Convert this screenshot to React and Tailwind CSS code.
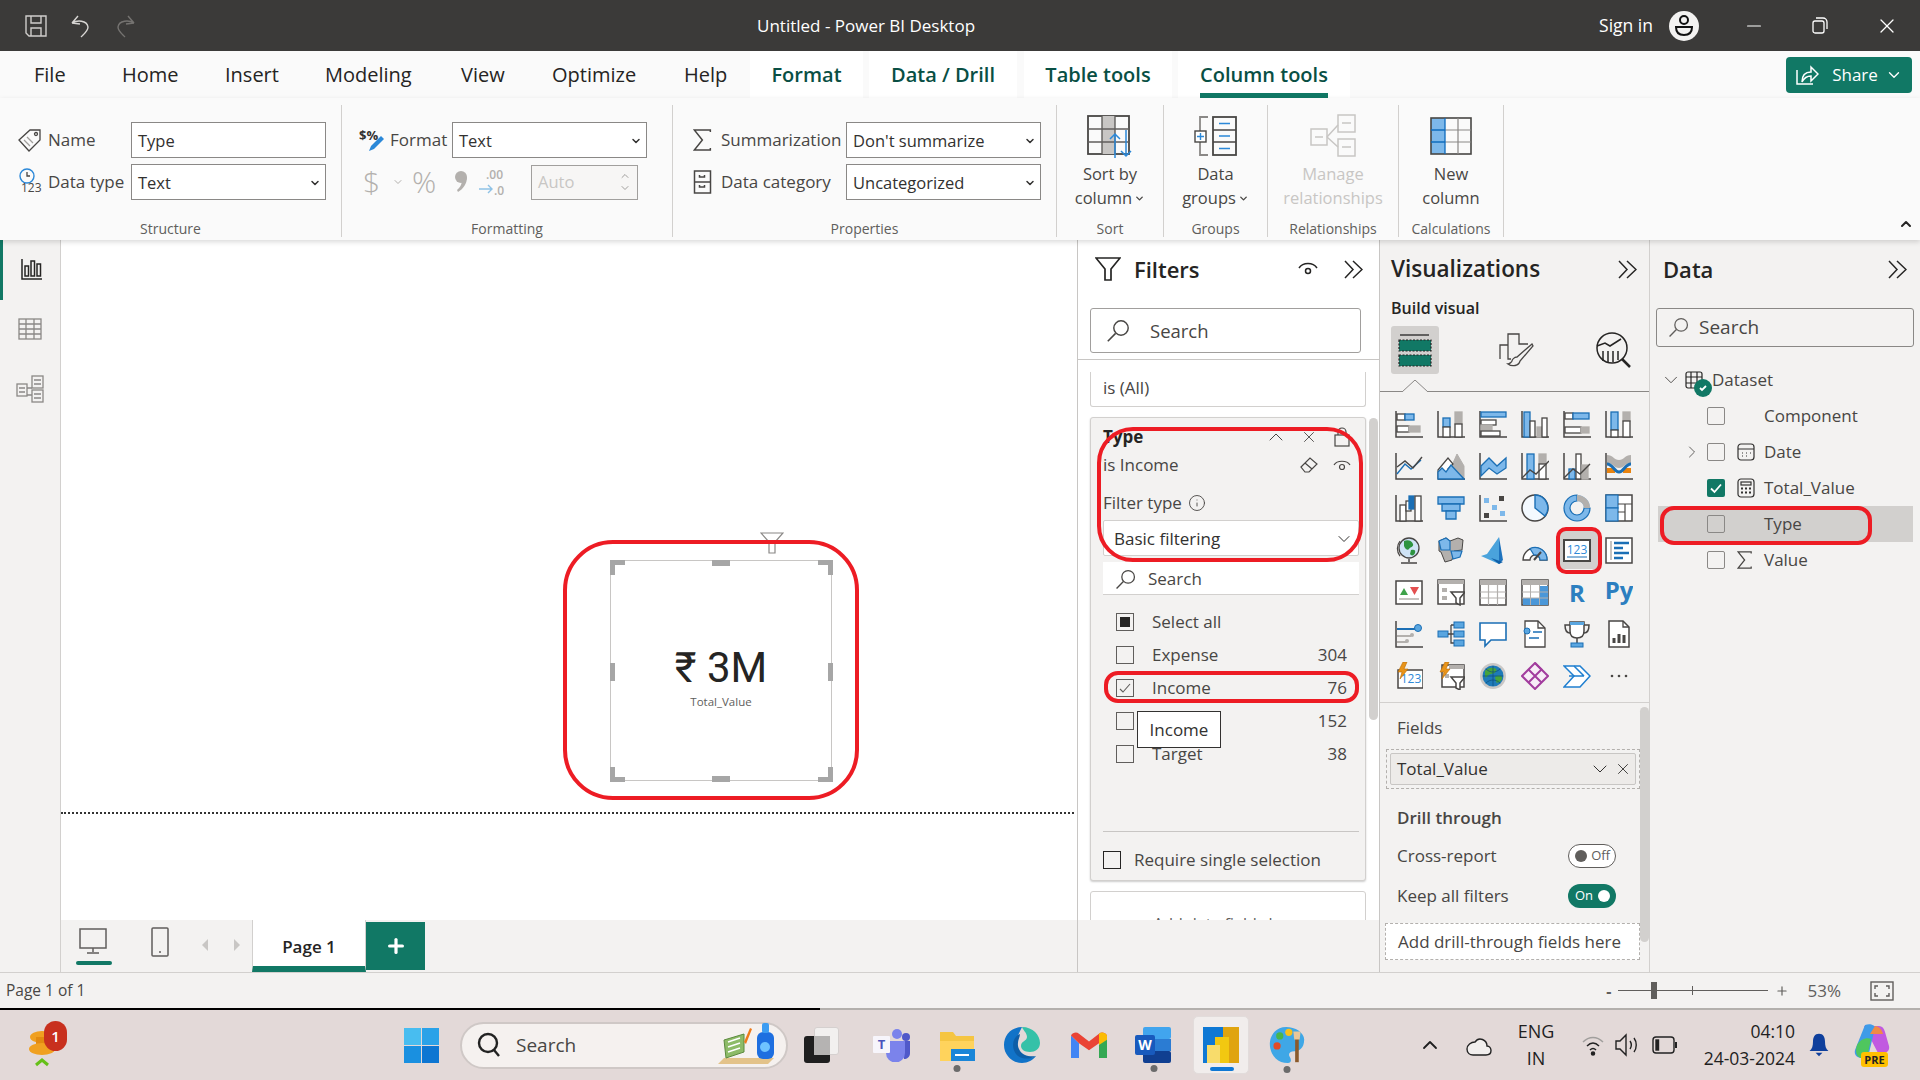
import React from "react";
import { X, Minus, ChevronDown, ChevronUp, ChevronRight, Plus, Info } from "lucide-react";

const D = "#484644";
const B = "#1b6fb5";
const L = "#7db8ea";
const G = "#b3b0ad";
const W = "#ffffff";

const Ico = ({ s = 28, box = 28, className = "", children }) => (
  <svg width={s} height={s} viewBox={`0 0 ${box} ${box}`} fill="none" className={className}>
    {children}
  </svg>
);

const Axis = () => <path d="M1 1v26h27" stroke={D} strokeWidth="1.5" />;
const R = ({ x, y, w, h, f = W, c = D }) => <rect x={x} y={y} width={w} height={h} fill={f} stroke={c} strokeWidth="1.3" />;

const vizIcons = [
  <><Axis /><R x="2" y="4" w="8" h="6" /><R x="10" y="4" w="9" h="6" f={L} c={B} /><R x="2" y="16" w="12" h="6" /><R x="14" y="16" w="11" h="6" f={G} c={G} /></>,
  <><Axis /><R x="6" y="8" w="7" h="9" f={L} c={B} /><R x="6" y="17" w="7" h="10" /><R x="18" y="2" w="7" h="12" f={G} c={G} /><R x="18" y="14" w="7" h="13" /></>,
  <><Axis /><R x="2" y="2" w="25" h="5" f={L} c={B} /><R x="2" y="10" w="15" h="5" /><R x="2" y="15" w="11" h="5" f={G} c={G} /><R x="2" y="21" w="19" h="5" /></>,
  <><Axis /><R x="3" y="2" w="6" h="25" f={L} c={B} /><R x="9" y="11" w="5" h="16" /><R x="16" y="17" w="5" h="10" f={G} c={G} /><R x="21" y="8" w="5" h="19" /></>,
  <><Axis /><R x="2" y="3" w="8" h="6" /><R x="10" y="3" w="16" h="6" f={L} c={B} /><R x="2" y="17" w="16" h="6" /><R x="18" y="17" w="8" h="6" f={G} c={G} /></>,
  <><Axis /><R x="6" y="2" w="7" h="18" f={L} c={B} /><R x="6" y="20" w="7" h="7" /><R x="18" y="2" w="7" h="9" f={G} c={G} /><R x="18" y="11" w="7" h="16" /></>,

  <><Axis /><path d="M2 22 10 12l6 5 10-9" stroke={B} strokeWidth="1.4" /><path d="M2 15l8-6 8 7 9-11" stroke={D} strokeWidth="1.4" /></>,
  <><path d="M1 27h27" stroke={D} strokeWidth="1.5" /><path d="M20 2l7 12v13H9z" fill={G} stroke={G} /><path d="M1 18 11 6l5 6-5 5 16 10H1z" fill={W} stroke={D} strokeWidth="1.2" /><path d="M1 27v-7l4-4 4 4 5-7 13 14z" fill={L} stroke={B} strokeWidth="1.3" /></>,
  <><Axis /><path d="M2 14l8-8 8 8 9-8v10l-9 6-8-6-8 8z" fill={L} stroke={B} strokeWidth="1.3" /></>,
  <><Axis /><R x="6" y="2" w="7" h="25" f={L} c={B} /><R x="18" y="2" w="7" h="10" f={G} c={G} /><R x="18" y="12" w="7" h="15" /><path d="M1 26l8-8 6 4 13-13" stroke={D} strokeWidth="1.4" /></>,
  <><Axis /><R x="6" y="17" w="6" h="10" f={L} c={B} /><R x="13" y="2" w="5" h="25" /><R x="19" y="13" w="6" h="14" f={G} c={G} /><path d="M1 26l9-9 7 5 10-10" stroke={D} strokeWidth="1.4" /></>,
  <><Axis /><path d="M2 3c6 0 7 5 12 5s6-5 12-5v8c-6 0-7 5-12 5S8 11 2 11z" fill={G} /><rect x="2" y="16" width="8" height="5" fill="#e8830f" /><rect x="18" y="16" width="8" height="5" fill="#e8830f" /><path d="M2 12c6 0 7 8 12 8s6-8 12-8" stroke={B} strokeWidth="3" /></>,

  <><Axis /><R x="5" y="11" w="6" h="16" /><R x="11" y="7" w="5" h="10" /><R x="14" y="2" w="5" h="13" f={B} c={B} /><R x="20" y="2" w="6" h="25" /></>,
  <><path d="M1 3h26v7H1z" fill={L} stroke={B} strokeWidth="1.3" /><path d="M5 10h18v7H5z" fill={L} stroke={B} strokeWidth="1.3" /><path d="M9 17h10v8H9z" fill={L} stroke={B} strokeWidth="1.3" /></>,
  <><Axis /><rect x="5" y="4" width="5" height="5" fill={L} /><rect x="20" y="2" width="5" height="5" fill={D} /><rect x="13" y="11" width="5" height="5" fill={L} /><rect x="21" y="17" width="5" height="5" fill={L} /><rect x="5" y="19" width="5" height="5" fill={D} /></>,
  <><circle cx="14" cy="14" r="13" fill="#f3f9fe" stroke={D} strokeWidth="1.5" /><path d="M14 14V1a13 13 0 0 1 10 21z" fill={L} stroke={B} strokeWidth="1.4" /></>,
  <><circle cx="14" cy="14" r="10" stroke={L} strokeWidth="6" /><path d="M14 1a13 13 0 1 0 13 13h-6a7 7 0 1 1-7-7z" fill={L} stroke={B} strokeWidth="1.2" /><path d="M14 1v6a7 7 0 0 1 7 7h6A13 13 0 0 0 14 1z" fill={G} /></>,
  <><rect x="1" y="1" width="26" height="26" fill={W} stroke={D} strokeWidth="1.5" /><rect x="1" y="1" width="12" height="13" fill={L} stroke={B} strokeWidth="1.2" /><rect x="1" y="14" width="12" height="13" fill={L} stroke={B} strokeWidth="1.2" /><path d="M13 10h14M20 10v17M13 18h7" stroke={D} strokeWidth="1.2" /></>,

  <><circle cx="14" cy="12" r="10" fill="#cfe3f5" stroke={D} strokeWidth="1.3" /><path d="M9 5c4-2 8 0 9 3s-3 3-4 5-4 0-5-3zM16 14c3-1 5 0 4 3s-4 3-5 1z" fill="#2d9440" /><path d="M14 23v3M6 27h16" stroke={D} strokeWidth="1.5" /><path d="M5 5a12 12 0 0 0 0 15" stroke={D} strokeWidth="1.2" /></>,
  <><path d="M2 5l7-3 4 3 8-3 5 2-1 10-8 1-2 9-7 2-4-10-2-1z" fill={G} stroke={D} strokeWidth="1" /><path d="M2 5l7-3 4 3v9H4zM14 15h11l-2 6-7 2z" fill={L} stroke={B} strokeWidth="1.2" /></>,
  <><path d="M20 1 8 18l-6 2 18 8z" fill="#4aa3dc" /><path d="M20 1v27l4-4z" fill="#1e73be" /><path d="M12 22l12 4-4 2z" fill="#0f5fa8" /></>,
  <><path d="M2 24a12 12 0 0 1 24 0h-7a5 5 0 0 0-10 0z" fill={W} stroke={D} strokeWidth="1.3" /><path d="M9 12.5A12 12 0 0 1 26 24h-7a5 5 0 0 0-6-5z" fill={L} stroke={B} strokeWidth="1.2" /><path d="M13 24l7-8" stroke={D} strokeWidth="2" /></>,
  <><rect x="1" y="4" width="26" height="21" fill={W} stroke={D} strokeWidth="2" /><text x="14" y="18" fontSize="12" textAnchor="middle" fill="#2f8ad8" fontFamily="Open Sans">123</text><path d="M4 21h20" stroke={B} strokeWidth="1" /></>,
  <><rect x="1" y="2" width="26" height="25" fill={W} stroke={D} strokeWidth="1.5" /><path d="M6 5v19" stroke={G} strokeWidth="1.5" /><path d="M9 7h15M9 12h9M9 17h15M9 22h9" stroke={B} strokeWidth="2.4" /></>,

  <><rect x="1" y="3" width="26" height="23" fill={W} stroke={D} strokeWidth="1.5" /><path d="M5 17l4-7 4 7z" fill="#3fa24a" /><path d="M15 9h9l-4.500 8z" fill="#e35050" /><path d="M4 21h20" stroke={G} strokeWidth="1.500" /></>,
  <><rect x="1" y="2" width="26" height="24" fill={W} stroke={D} strokeWidth="1.5" /><rect x="1" y="2" width="26" height="4" fill={G} /><rect x="5" y="10" width="5" height="4" fill={G} /><rect x="5" y="18" width="5" height="4" fill={G} /><path d="M14 14h14l-5 6v7l-4-2v-5z" fill={W} stroke={D} strokeWidth="1.5" /></>,
  <><rect x="1" y="2" width="26" height="25" fill={W} stroke={D} strokeWidth="1.5" /><rect x="1" y="2" width="26" height="5" fill={G} /><path d="M1 14h26M1 20h26M9.500 7v20M18.500 7v20" stroke={G} strokeWidth="1.200" /></>,
  <><rect x="1" y="2" width="26" height="25" fill={W} stroke={D} strokeWidth="1.5" /><rect x="1" y="2" width="26" height="5" fill={G} /><rect x="18" y="8" width="9" height="18" fill="#4a97d8" /><rect x="2" y="20" width="25" height="7" fill="#4a97d8" /><path d="M1 14h26M1 20h26M9.500 7v20M18.500 7v20" stroke={G} strokeWidth="1" /></>,
  <text x="14" y="24" fontSize="24" fontWeight="700" textAnchor="middle" fill="#2c7fc0" fontFamily="Open Sans">R</text>,
  <text x="14" y="21" fontSize="24" fontWeight="700" textAnchor="middle" fill="#2c7fc0" fontFamily="Open Sans">Py</text>,

  <><Axis /><path d="M2 9h22" stroke={B} strokeWidth="2" /><circle cx="23" cy="8" r="3.500" fill="#5aa6e0" stroke={B} /><path d="M2 16h14M2 22h10" stroke={G} strokeWidth="2" /><circle cx="17" cy="15" r="2" fill={G} /><circle cx="12" cy="21" r="2" fill={G} /></>,
  <><rect x="1" y="11" width="10" height="6" fill="#5aa6e0" stroke={B} /><path d="M11 14h6M14 5v18h3M14 5h3" stroke={D} strokeWidth="1.300" /><rect x="17" y="2" width="10" height="6" fill="#5aa6e0" stroke={B} /><rect x="17" y="11" width="10" height="6" fill="#5aa6e0" stroke={B} /><rect x="17" y="20" width="10" height="6" fill="#5aa6e0" stroke={B} /></>,
  <path d="M1 3h26v17H12l-6 6v-6H1z" fill={W} stroke={B} strokeWidth="1.600" />,
  <><path d="M4 1h13l7 7v19H4z" fill={W} stroke={D} strokeWidth="1.300" /><path d="M17 1v7h7" stroke={D} strokeWidth="1.300" /><circle cx="6" cy="11" r="3" fill="#5aa6e0" stroke={B} /><path d="M12 12h9M8 18h10" stroke={B} strokeWidth="1.300" /></>,
  <><path d="M7 2h14v9c0 5-3 7-7 7s-7-2-7-7z" fill={W} stroke={D} strokeWidth="1.500" /><rect x="7" y="2" width="14" height="3" fill="#5aa6e0" /><path d="M7 5H2c0 6 2 8 5 8M21 5h5c0 6-2 8-5 8M14 18v5" stroke={D} strokeWidth="1.500" /><rect x="8" y="23" width="12" height="4" fill="#5aa6e0" stroke={B} /></>,
  <><path d="M4 1h14l6 6v20H4z" fill={W} stroke={D} strokeWidth="1.500" /><path d="M18 1v6h6" stroke={D} strokeWidth="1.300" /><path d="M9 23v-5M14 23V14M19 23v-8" stroke={D} strokeWidth="3" /></>,

  <><rect x="3" y="8" width="25" height="18" fill={W} stroke={D} strokeWidth="1.500" /><text x="16" y="21" fontSize="12" textAnchor="middle" fill="#2f8ad8" fontFamily="Open Sans">123</text><path d="M8 0 3 10h4l-2 7 8-10H9l3-7z" fill="#e8941a" stroke="#b96a00" strokeWidth=".6" /></>,
  <><rect x="5" y="3" width="22" height="22" fill={W} stroke={D} strokeWidth="1.500" /><rect x="12" y="3" width="15" height="4" fill={G} /><path d="M14 15h14l-5 6v7l-4-2v-5z" fill={W} stroke={D} strokeWidth="1.500" /><rect x="8" y="12" width="4" height="4" fill={G} /><path d="M8 0 3 10h4l-2 7 8-10H9l3-7z" fill="#e8941a" stroke="#b96a00" strokeWidth=".6" /></>,
  <><circle cx="14" cy="14" r="13" fill="#c9c7c5" /><circle cx="14" cy="14" r="10.500" fill="#1e7ab8" /><path d="M6 9c3-4 9-4 11-2s-2 5-5 5-4 5-6 3zM16 15c3-2 7-2 7 1s-4 6-6 4z" fill="#46a33c" /><path d="M4 14h20M14 4v20M7 7c4 4 10 4 14 0M7 21c4-4 10-4 14 0" stroke="#0b4b78" strokeWidth=".7" /></>,
  <><path d="M14 1l13 13-13 13L1 14z" fill="#f7edf7" stroke="#a23d9e" strokeWidth="2" /><path d="M14 1l6.500 6.500L7.500 20.500M7.500 7.500l13 13" stroke="#a23d9e" strokeWidth="2" /></>,
  <><path d="M1 4h16l10 10-10 11H1l10-11z" fill={W} stroke="#1f7fd0" strokeWidth="1.500" /><path d="M6 14h15M11 4l10 10" stroke="#1f7fd0" strokeWidth="1.500" /></>,
  <><circle cx="7" cy="14" r="1.300" fill={D} /><circle cx="14" cy="14" r="1.300" fill={D} /><circle cx="21" cy="14" r="1.300" fill={D} /></>,
];

const SearchIcon = ({ s = 20, c = "#484644", className = "" }) => (
  <svg width={s} height={s} viewBox="0 0 20 20" fill="none" className={className}>
    <circle cx="12.500" cy="7.500" r="6" stroke={c} strokeWidth="1.200" />
    <path d="M8 12 1.500 18.500" stroke={c} strokeWidth="1.300" />
  </svg>
);

const Chevrons = () => (
  <svg width="19" height="19" viewBox="0 0 19 19" fill="none" stroke="#252423" strokeWidth="1.500">
    <path d="M1 1l8 8.500-8 8.500M9 1l9 8.500-9 8.500" />
  </svg>
);

const SelectBox = ({ label }) => (
  <div className="w-[195px] h-[36px] bg-white border border-[#8a8886] flex items-center justify-between pl-[6px] pr-[4px] pt-[2px] text-[16.500px] text-[#323130]">
    <span>{label}</span>
    <ChevronDown size={12} strokeWidth={3} className="text-[#323130]" />
  </div>
);

const TitleBar = () => (
  <div className="h-[51px] shrink-0 bg-[#3b3a39] flex items-center text-white">
    <div className="w-[145px] pl-[25px] flex items-center gap-[24px]">
      <svg width="22" height="24" viewBox="0 0 22 24" fill="none" stroke="#cfcdcb" strokeWidth="1.400">
        <path d="M1 2h20v20H4l-3-3z" />
        <path d="M6 2v7h10V2M6 22v-8h10v8" />
      </svg>
      <svg width="20" height="24" viewBox="0 0 20 24" fill="none" stroke="#d8d6d4" strokeWidth="1.400">
        <path d="M1 9l6-7M1 9l8 1M1 9c5-3 15-3 16 4 0 4-4 7-7 10" />
      </svg>
      <svg width="20" height="24" viewBox="0 0 20 24" fill="none" stroke="#757371" strokeWidth="1.400">
        <path d="M19 9l-6-7M19 9l-8 1M19 9C14 6 4 6 3 13c0 4 4 7 7 10" />
      </svg>
    </div>
    <div className="ml-[612px] w-[220px] text-[17px] whitespace-nowrap">Untitled - Power BI Desktop</div>
    <div className="ml-auto flex items-center">
      <span className="text-[17.500px]">Sign in</span>
      <div className="ml-[16px] w-[30px] h-[30px] rounded-full bg-[#f3f2f1] flex items-center justify-center">
        <svg width="22" height="24" viewBox="0 0 22 24" fill="none" stroke="#111" strokeWidth="2">
          <circle cx="11" cy="6" r="4" />
          <path d="M3 13h16c0 5-3 8-8 8s-8-3-8-8z" />
        </svg>
      </div>
      <Minus size={22} strokeWidth={1.300} className="ml-[44px]" />
      <svg width="16" height="17" viewBox="0 0 16 17" fill="none" stroke="white" strokeWidth="1.300" className="ml-[47px]">
        <rect x="1" y="4" width="11" height="12" rx="2" />
        <path d="M4 1h7a4 4 0 0 1 4 4v7" />
      </svg>
      <X size={24} strokeWidth={1.300} className="ml-[47px] mr-[21px]" />
    </div>
  </div>
);

const plainTabs = [
  ["File", "w-[84px]", "pl-[34px]"],
  ["Home", "w-[102px]", "pl-[38px]"],
  ["Insert", "w-[100px]", "pl-[39px]"],
  ["Modeling", "w-[136px]", "pl-[39px]"],
  ["View", "w-[91px]", "pl-[39px]"],
  ["Optimize", "w-[132px]", "pl-[39px]"],
  ["Help", "w-[105px]", "pl-[39px]"],
];

const TabBar = () => (
  <div className="h-[47px] shrink-0 bg-[#fafafa] flex items-start text-[20px] text-[#252423]">
    {plainTabs.map(([t, w, p]) => (
      <div key={t} className={`${w} ${p} h-[47px] flex items-center`}>{t}</div>
    ))}
    <div className="w-[113px] h-[47px] bg-white flex items-center justify-center font-semibold text-[#094f44]">Format</div>
    <div className="w-[148px] ml-[6px] h-[47px] bg-white flex items-center justify-center font-semibold text-[#094f44]">Data / Drill</div>
    <div className="w-[148px] ml-[7px] h-[47px] bg-white flex items-center justify-center font-semibold text-[#094f44]">Table tools</div>
    <div className="w-[172px] ml-[6px] h-[47px] bg-white relative flex items-center justify-center font-semibold text-[#094f44]">
      Column tools
      <div className="absolute left-[22px] bottom-0 w-[128px] h-[5px] bg-[#117865]" />
    </div>
    <div className="ml-auto mr-[8px] mt-[6px] w-[126px] h-[36px] rounded-[4px] bg-[#117865] text-white flex items-center justify-center gap-[13px] text-[17px]">
      <svg width="24" height="24" viewBox="0 0 24 24" fill="none" stroke="white" strokeWidth="1.500">
        <path d="M2 7v14h16" />
        <path d="M7 19c0-7 4-10 9-10V4l7 7-7 7v-5c-4 0-7 2-9 6z" />
      </svg>
      <span className="flex items-center gap-[7px]">Share<ChevronDown size={18} strokeWidth={1.800} /></span>
    </div>
  </div>
);

const RibbonGroup = ({ w, label, children }) => (
  <div className={`${w} h-[132px] shrink-0 border-r border-[#d2d0ce] flex flex-col`}>
    <div className="flex-1">{children}</div>
    <div className="h-[16px] text-center text-[14px] text-[#605e5c] leading-[16px] whitespace-nowrap">{label}</div>
  </div>
);

const LargeBtn = ({ top, bottom, disabled, children }) => (
  <div className={`flex flex-col items-center pt-[6px] text-[16.500px] leading-[24px] ${disabled ? "text-[#c8c6c4]" : "text-[#484644]"}`}>
    <div className="h-[50px] flex items-center">{children}</div>
    <div className="mt-[1px]">{top}</div>
    <div className="flex items-center gap-[2px] whitespace-nowrap">{bottom}</div>
  </div>
);

const Ribbon = () => (
  <div className="h-[142px] shrink-0 bg-[#fafafa] relative z-10 shadow-[0_2px_5px_rgba(0,0,0,0.15)] flex pt-[7px] text-[17px] text-[#484644]">
    <RibbonGroup w="w-[342px]" label="Structure">
      <div className="pt-[17px] pl-[18px] flex flex-col gap-[6px]">
        <div className="flex items-center">
          <svg width="24" height="24" viewBox="0 0 24 24" fill="none" stroke="#484644" strokeWidth="1.300" className="w-[24px]">
            <path d="M1 12 12 2h10v10L11 23z" />
            <circle cx="18" cy="6" r="1.500" />
            <path d="M6 12l6 6M9 9l6 6" stroke="#a19f9d" />
          </svg>
          <span className="w-[89px] pl-[6px]">Name</span>
          <div className="w-[195px] h-[36px] bg-white border border-[#8a8886] flex items-center pl-[6px] pt-[2px] text-[16.500px] text-[#323130]">Type</div>
        </div>
        <div className="flex items-center">
          <svg width="24" height="28" viewBox="0 0 24 28" fill="none" className="w-[24px]">
            <circle cx="9" cy="8" r="7" stroke="#2b88d8" strokeWidth="1.400" />
            <path d="M9 4v4h3" stroke="#484644" strokeWidth="1.300" />
            <text x="3" y="24" fontSize="12" fill="#484644" fontFamily="Open Sans">123</text>
          </svg>
          <span className="w-[89px] pl-[6px] whitespace-nowrap">Data type</span>
          <SelectBox label="Text" />
        </div>
      </div>
    </RibbonGroup>
    <RibbonGroup w="w-[331px]" label="Formatting">
      <div className="pt-[17px] pl-[17px] flex flex-col gap-[6px]">
        <div className="flex items-center">
          <svg width="26" height="28" viewBox="0 0 26 28" fill="none" className="w-[26px]">
            <text x="0" y="14" fontSize="13" fontWeight="700" fill="#323130" fontFamily="Open Sans">$%</text>
            <path d="M10 25l2-5 10-10 3 3-10 10z" fill="#2b88d8" />
          </svg>
          <span className="w-[67px] pl-[5px]">Format</span>
          <SelectBox label="Text" />
        </div>
        <div className="flex items-center h-[36px]">
          <span className="ml-[4px] w-[24px] text-[30px] leading-[36px] font-light text-[#b3b0ad]">$</span>
          <ChevronDown size={12} className="text-[#b3b0ad] w-[22px]" />
          <span className="w-[36px] ml-[3px] text-[30px] leading-[36px] font-light text-[#b3b0ad]">%</span>
          <svg width="14" height="26" viewBox="0 0 14 26" fill="#b3b0ad" className="ml-[6px]">
            <circle cx="7" cy="8" r="6" />
            <path d="M13 8c0 7-4 12-9 15l-1-2c4-3 5-7 5-11z" />
          </svg>
          <svg width="28" height="34" viewBox="0 0 28 34" fill="none" className="ml-[10px]">
            <text x="8" y="14" fontSize="12" fill="#b3b0ad" fontWeight="600" fontFamily="Open Sans">.00</text>
            <text x="16" y="30" fontSize="12" fill="#b3b0ad" fontWeight="600" fontFamily="Open Sans">.0</text>
            <path d="M1 24h13M10 20l4 4-4 4" stroke="#8ec2e6" strokeWidth="1.400" />
          </svg>
          <div className="ml-[25px] w-[107px] h-[35px] border border-[#a19f9d] bg-[#f7f6f5] flex items-center justify-between pl-[6px] pr-[6px] text-[16.500px] text-[#c8c6c4]">
            Auto
            <div className="flex flex-col text-[#a19f9d]">
              <ChevronUp size={12} />
              <ChevronDown size={12} />
            </div>
          </div>
        </div>
      </div>
    </RibbonGroup>
    <RibbonGroup w="w-[384px]" label="Properties">
      <div className="pt-[17px] pl-[20px] flex flex-col gap-[6px]">
        <div className="flex items-center">
          <span className="w-[19px]"><Sigma /></span>
          <span className="w-[134px] pl-[9px] whitespace-nowrap">Summarization</span>
          <SelectBox label="Don't summarize" />
        </div>
        <div className="flex items-center">
          <svg width="18" height="24" viewBox="0 0 18 24" fill="none" stroke="#484644" strokeWidth="1.500" className="w-[19px]">
            <rect x="1" y="1" width="16" height="22" />
            <path d="M1 12h16M6 5v2h5V5M6 15v2h5v-2" />
          </svg>
          <span className="w-[134px] pl-[9px] whitespace-nowrap">Data category</span>
          <SelectBox label="Uncategorized" />
        </div>
      </div>
    </RibbonGroup>
    <RibbonGroup w="w-[107px]" label="Sort">
      <LargeBtn top="Sort by" bottom={<>column<ChevronDown size={11} strokeWidth={3} /></>}>
        <svg width="46" height="44" viewBox="0 0 46 44" fill="none">
          <rect x="1" y="2" width="41" height="38" stroke="#484644" strokeWidth="1.800" />
          <rect x="15" y="2" width="13" height="38" fill="#c8c6c4" />
          <path d="M1 15h41M1 28h41M15 2v38M28 2v38" stroke="#605e5c" strokeWidth="1.400" />
          <path d="M28 44V20M23 25l5-5 5 5" stroke="#2b88d8" strokeWidth="1.500" />
          <path d="M39 16v26M34 37l5 5 5-5" stroke="#2b88d8" strokeWidth="1.500" />
        </svg>
      </LargeBtn>
    </RibbonGroup>
    <RibbonGroup w="w-[104px]" label="Groups">
      <LargeBtn top="Data" bottom={<>groups<ChevronDown size={11} strokeWidth={3} /></>}>
        <svg width="44" height="40" viewBox="0 0 44 40" fill="none">
          <path d="M14 1H6v38h8" stroke="#8a8886" strokeWidth="1.800" />
          <rect x="1" y="15" width="11" height="11" fill="#fff" stroke="#484644" strokeWidth="1.400" />
          <path d="M3 20.500h7M6.500 17v7" stroke="#2b88d8" strokeWidth="1.400" />
          <rect x="19" y="1" width="23" height="38" stroke="#484644" strokeWidth="1.800" />
          <path d="M19 14h23M19 26h23" stroke="#484644" strokeWidth="1.500" />
          <path d="M25 7.500h11M25 20h11M25 32.500h11" stroke="#2b88d8" strokeWidth="1.500" />
        </svg>
      </LargeBtn>
    </RibbonGroup>
    <RibbonGroup w="w-[131px]" label="Relationships">
      <LargeBtn disabled top="Manage" bottom="relationships">
        <svg width="46" height="44" viewBox="0 0 46 44" fill="none" stroke="#c8c6c4" strokeWidth="1.500">
          <rect x="1" y="15" width="16" height="16" />
          <rect x="28" y="1" width="17" height="17" />
          <rect x="28" y="25" width="17" height="17" />
          <path d="M17 23l11-12M17 23l11 10M5 23h8M32 9h9M32 33h9" />
        </svg>
      </LargeBtn>
    </RibbonGroup>
    <RibbonGroup w="w-[105px]" label="Calculations">
      <LargeBtn top="New" bottom="column">
        <svg width="42" height="38" viewBox="0 0 42 38" fill="none">
          <rect x="1" y="1" width="14" height="36" fill="#7db8ea" />
          <rect x="1" y="1" width="40" height="36" stroke="#484644" strokeWidth="1.600" />
          <path d="M15 13h26M15 25h26M28 1v36" stroke="#8a8886" strokeWidth="1.200" />
          <path d="M1 13h14M1 25h14M15 1v36" stroke="#0f6cbd" strokeWidth="1.300" />
        </svg>
      </LargeBtn>
    </RibbonGroup>
    <ChevronUp size={16} strokeWidth={3} className="absolute right-[6px] top-[118px] text-[#252423]" />
  </div>
);

const Sigma = ({ s = 22 }) => (
  <svg width={s * 0.85} height={s} viewBox="0 0 18 22" fill="none" stroke="#484644" strokeWidth="1.500">
    <path d="M17 3V1H1l8 10-8 10h16v-2" />
  </svg>
);

const Sidebar = () => (
  <div className="w-[61px] shrink-0 bg-[#f3f2f1] border-r border-[#d2d0ce] flex flex-col">
    <div className="h-[60px] border-l-[3px] border-[#117865] flex items-center justify-center pb-[2px]">
      <svg width="22" height="22" viewBox="0 0 22 22" fill="none" stroke="#252423" strokeWidth="1.500">
        <path d="M1 1v20h20" />
        <rect x="4" y="8" width="3.500" height="10" />
        <rect x="10" y="3" width="3.500" height="15" />
        <rect x="16" y="6" width="3.500" height="12" />
      </svg>
    </div>
    <div className="h-[60px] flex items-center justify-center pb-[2px]">
      <svg width="24" height="22" viewBox="0 0 24 22" fill="none" stroke="#8a8886" strokeWidth="1.300">
        <rect x="1" y="1" width="22" height="20" />
        <path d="M1 6h22M1 11h22M1 16h22M8 1v20M16 1v20" />
      </svg>
    </div>
    <div className="h-[60px] flex items-center justify-center pb-[2px]">
      <svg width="28" height="28" viewBox="0 0 28 28" fill="none" stroke="#8a8886" strokeWidth="1.300">
        <rect x="1" y="9" width="10" height="12" />
        <rect x="16" y="1" width="11" height="12" />
        <rect x="16" y="15" width="11" height="12" />
        <path d="M11 13h5M11 20h5M3 13h6M3 17h6M18 5h7M18 9h7M18 19h7M18 23h7" />
      </svg>
    </div>
  </div>
);

const Handle = ({ className }) => <div className={`absolute bg-[#a6a6a6] ${className}`} />;

const VisualCard = () => (
  <div className="absolute left-[549px] top-[320px] w-[222px] h-[221px] border border-[#c8c6c4] bg-white flex flex-col items-center justify-center">
    <div className="text-[42px] leading-[50px] text-[#252423] font-['Roboto','DejaVu_Sans',sans-serif] mt-[10px] whitespace-nowrap">₹ 3M</div>
    <div className="text-[11.500px] leading-[14px] text-[#605e5c] font-['Open_Sans',sans-serif] mt-[2px]">Total_Value</div>
    <Handle className="-left-[1px] -top-[1px] w-[15px] h-[5px]" />
    <Handle className="-left-[1px] -top-[1px] w-[5px] h-[15px]" />
    <Handle className="-right-[2px] -top-[1px] w-[15px] h-[5px]" />
    <Handle className="-right-[2px] -top-[1px] w-[5px] h-[15px]" />
    <Handle className="-left-[1px] -bottom-[2px] w-[15px] h-[5px]" />
    <Handle className="-left-[1px] -bottom-[2px] w-[5px] h-[15px]" />
    <Handle className="-right-[2px] -bottom-[2px] w-[15px] h-[5px]" />
    <Handle className="-right-[2px] -bottom-[2px] w-[5px] h-[15px]" />
    <Handle className="left-[101px] -top-[1px] w-[18px] h-[6px]" />
    <Handle className="left-[101px] -bottom-[2px] w-[18px] h-[6px]" />
    <Handle className="-left-[1px] top-[102px] w-[5px] h-[18px]" />
    <Handle className="-right-[2px] top-[102px] w-[5px] h-[18px]" />
    <svg width="24" height="22" viewBox="0 0 24 22" fill="white" stroke="#8a8886" strokeWidth="1.200" className="absolute left-[149px] -top-[29px]">
      <path d="M1 1h22l-8 9v11H9V10z" />
    </svg>
  </div>
);

const Center = () => (
  <div className="w-[1016px] shrink-0 flex flex-col">
    <div className="h-[680px] bg-white relative">
      <div className="h-[574px] border-b-[2px] border-dotted border-[#333] mr-[3px]" />
      <VisualCard />
      <div className="absolute left-[502px] top-[300px] w-[296px] h-[260px] border-[4px] border-[#ed1c24] rounded-[50px]" />
    </div>
    <div className="h-[52px] bg-[#f3f2f1] flex items-end">
      <div className="w-[64px] h-[52px] relative flex items-center justify-center">
        <svg width="28" height="26" viewBox="0 0 28 26" fill="none" stroke="#605e5c" strokeWidth="1.500" className="mb-[10px]">
          <rect x="1" y="1" width="26" height="19" />
          <path d="M14 20v4M8 25h12" />
        </svg>
        <div className="absolute left-[15px] bottom-[7px] w-[36px] h-[4px] rounded-full bg-[#117865]" />
      </div>
      <div className="w-[70px] h-[52px] flex items-center justify-center">
        <svg width="18" height="30" viewBox="0 0 18 30" fill="none" stroke="#605e5c" strokeWidth="1.500" className="mb-[8px]">
          <rect x="1" y="1" width="16" height="28" rx="1" />
          <path d="M8 25h2" />
        </svg>
      </div>
      <div className="w-[57px] h-[52px] flex items-center pl-[7px] gap-[26px] pb-[2px]">
        <span className="w-0 h-0 border-y-[6px] border-y-transparent border-r-[6px] border-r-[#c8c6c4]" />
        <span className="w-0 h-0 border-y-[6px] border-y-transparent border-l-[6px] border-l-[#c8c6c4]" />
      </div>
      <div className="w-[114px] h-[52px] bg-white border-b-[6px] border-[#117865] border-x border-x-[#d2d0ce] pt-[8px] flex items-center justify-center text-[17px] font-semibold text-[#252423]">Page 1</div>
      <div className="w-[59px] h-[48px] mb-[2px] bg-[#117865] flex items-center justify-center text-white">
        <Plus size={22} strokeWidth={3.500} />
      </div>
    </div>
  </div>
);

const Row = ({ label, count, checked, children }) => (
  <div className="h-[33px] flex items-center pl-[25px] pr-[18px] text-[#484644] relative">
    <div className="w-[18px] h-[18px] border border-[#605e5c] flex items-center justify-center mr-[18px]">
      {checked === "all" && <div className="w-[10px] h-[10px] bg-[#252423]" />}
      {checked === true && (
        <svg width="14" height="14" viewBox="0 0 14 14" fill="none" stroke="#605e5c" strokeWidth="1.100"><path d="M2 8l3 3 7-8" /></svg>
      )}
    </div>
    <span>{label}</span>
    <span className="ml-auto">{count}</span>
    {children}
  </div>
);

const FilterPane = () => (
  <div className="w-[303px] shrink-0 bg-white border-r border-l border-[#c8c6c4] pl-[2px] flex flex-col relative overflow-hidden">
    <div className="h-[58px] flex items-center pl-[15px] pr-[16px] shrink-0">
      <svg width="26" height="26" viewBox="0 0 26 26" fill="none" stroke="#252423" strokeWidth="1.700">
        <path d="M1 2h24l-9 11v11h-6V13z" />
      </svg>
      <span className="ml-[13px] text-[22px] font-semibold text-[#252423]">Filters</span>
      <svg width="20" height="16" viewBox="0 0 20 16" fill="none" stroke="#252423" strokeWidth="1.500" className="ml-auto mr-[26px]">
        <path d="M1 7c4-6 14-6 18 0" />
        <circle cx="10" cy="10" r="2.500" />
      </svg>
      <Chevrons />
    </div>
    <div className="h-[45px] ml-[10px] mr-[18px] border border-[#a19f9d] rounded-[3px] flex items-center pl-[15px] mt-[10px] shrink-0 text-[18.500px] text-[#484644]">
      <SearchIcon s={24} />
      <span className="ml-[20px]">Search</span>
    </div>
    <div className="h-[7px] -ml-[2px] border-b border-[#c8c6c4] shrink-0" />
    <div className="h-[35px] mt-[12px] ml-[10px] mr-[13px] border border-t-0 border-[#d2d0ce] rounded-b-[3px] flex items-center pl-[12px] pb-[2px] shrink-0 text-[17px] text-[#484644]">is (All)</div>
    <div className="h-[464px] mt-[10px] ml-[10px] mr-[13px] border border-[#d2d0ce] rounded-[3px] bg-[#f3f2f1] shadow-[0_1px_2px_rgba(0,0,0,0.2)] shrink-0 relative px-[12px] text-[#484644] text-[17px]">
      <div className="h-[36px] flex items-center pt-[2px]">
        <span className="font-bold text-[#252423]">Type</span>
        <ChevronUp size={24} strokeWidth={1} className="ml-auto" />
        <X size={18} strokeWidth={1.200} className="ml-[12px]" />
        <svg width="16" height="20" viewBox="0 0 16 20" fill="none" stroke="#484644" strokeWidth="1.200" className="ml-[16px] mr-[3px]">
          <rect x="1" y="8" width="14" height="11" />
          <path d="M4 8V5a4 4 0 0 1 8 0v3" />
        </svg>
      </div>
      <div className="h-[22px] flex items-center">
        <span className="whitespace-nowrap">is Income</span>
        <svg width="18" height="18" viewBox="0 0 18 18" fill="none" stroke="#484644" strokeWidth="1.200" className="ml-auto">
          <path d="M1 11l9-9 7 6-8 8H5zM5 7l7 6" />
        </svg>
        <svg width="18" height="18" viewBox="0 0 18 18" fill="none" stroke="#484644" strokeWidth="1.200" className="ml-[15px] mr-[2px]">
          <path d="M1 9c3-5 13-5 16 0" />
          <circle cx="9" cy="11" r="2.500" />
        </svg>
      </div>
      <div className="h-[24px] mt-[15px] flex items-center">
        <span>Filter type</span>
        <Info size={18} strokeWidth={1.200} className="ml-[6px]" />
      </div>
      <div className="h-[36px] mt-[5px] -mr-[6px] bg-white border border-[#d2d0ce] rounded-[2px] flex items-center justify-between pl-[10px] pr-[4px] pt-[2px] text-[#323130]">
        Basic filtering
        <ChevronDown size={20} strokeWidth={1.200} />
      </div>
      <div className="h-[33px] mt-[6px] -mr-[6px] bg-white border-b border-[#d2d0ce] flex items-center pl-[12px] pt-[2px]">
        <SearchIcon s={21} />
        <span className="ml-[12px]">Search</span>
      </div>
      <div className="mt-[10px] -mx-[12px]">
        <Row label="Select all" checked="all" />
        <Row label="Expense" count="304" />
        <Row label="Income" count="76" checked>
          <div className="absolute left-[13px] top-[0px] w-[255px] h-[32px] border-[4px] border-[#ed1c24] rounded-[14px]" />
        </Row>
        <Row count="152">
          <div className="absolute left-[46px] top-[7px] w-[84px] h-[37px] bg-white border border-[#323130] flex items-center justify-center text-[#323130] z-10">Income</div>
        </Row>
        <Row label="Target" count="38" />
      </div>
      <div className="mt-[61px] -mr-[6px] border-t border-[#c8c6c4] pt-[15px] flex items-center">
        <div className="w-[18px] h-[18px] border border-[#252423] mr-[13px]" />
        <span>Require single selection</span>
      </div>
      <div className="absolute left-[6px] top-[9px] w-[266px] h-[135px] border-[4px] border-[#ed1c24] rounded-[36px]" />
    </div>
    <div className="h-[60px] mt-[10px] ml-[10px] mr-[13px] border border-[#d2d0ce] rounded-[3px] text-[16px] text-[#605e5c] text-center pt-[20px] shrink-0">Add data fields here</div>
    <div className="absolute left-[291px] top-[178px] w-[9px] h-[302px] rounded-full bg-[#d2d0ce]" />
    <div className="absolute left-0 right-0 bottom-0 h-[52px] bg-[#f3f2f1]" />
  </div>
);

const Toggle = ({ on }) =>
  on ? (
    <div className="w-[48px] h-[24px] rounded-full bg-[#117865] text-white text-[13px] flex items-center justify-between pl-[7px] pr-[6px]">
      On<span className="w-[12px] h-[12px] rounded-full bg-white" />
    </div>
  ) : (
    <div className="w-[48px] h-[24px] rounded-full border border-[#605e5c] bg-white text-[#605e5c] text-[13px] flex items-center justify-between pl-[6px] pr-[5px]">
      <span className="w-[12px] h-[12px] rounded-full bg-[#605e5c]" />Off
    </div>
  );

const VizPane = () => (
  <div className="w-[270px] shrink-0 bg-[#f3f2f1] border-r border-[#d2d0ce] flex flex-col relative text-[17px]">
    <div className="h-[58px] flex items-center pl-[11px] pr-[12px] shrink-0">
      <span className="text-[22.500px] font-semibold text-[#252423]">Visualizations</span>
      <span className="ml-auto"><Chevrons /></span>
    </div>
    <div className="h-[20px] pl-[11px] flex items-center text-[16px] font-semibold text-[#252423] shrink-0">Build visual</div>
    <div className="h-[48px] mt-[8px] flex items-center shrink-0">
      <div className="ml-[11px] w-[48px] h-[48px] bg-[#d2d0ce] rounded-[3px] flex items-center justify-center">
        <svg width="36" height="36" viewBox="0 0 36 36" fill="none">
          <path d="M3 3h29" stroke="#252423" strokeWidth="1.300" />
          <rect x="2" y="8" width="32" height="11" fill="#117865" stroke="#252423" strokeWidth="1.200" strokeDasharray="2 1.500" />
          <rect x="2" y="23" width="32" height="11" fill="#117865" stroke="#252423" strokeWidth="1.200" strokeDasharray="2 1.500" />
        </svg>
      </div>
      <svg width="36" height="38" viewBox="0 0 36 38" fill="none" stroke="#484644" strokeWidth="1.300" className="ml-[60px]">
        <path d="M1 28V14h8V3h11v10h9M9 14v14h3" />
        <path d="M33 13 18 26c-3 0-5 3-5 4s-3 3-4 3c4 3 11 2 12-3l13-15z" fill="#f3f2f1" />
      </svg>
      <svg width="38" height="38" viewBox="0 0 38 38" fill="none" stroke="#252423" strokeWidth="1.500" className="ml-[60px]">
        <circle cx="17" cy="17" r="15" />
        <path d="M27 28l8 8" strokeWidth="2.500" />
        <path d="M2 15l8-3 5 3 11-7M8 20v10M13 20v11M18 20v11M23 20v9" />
      </svg>
    </div>
    <div className="h-[18px] border-b border-[#8a8886] shrink-0 relative">
      <svg width="26" height="12" viewBox="0 0 26 12" fill="#f3f2f1" stroke="#8a8886" className="absolute left-[22px] top-[6px]">
        <path d="M0 12 13 0l13 12" />
      </svg>
    </div>
    <div className="grid grid-cols-6 w-[252px] ml-[8px] mt-[11px] shrink-0">
      {vizIcons.map((icon, i) => (
        <div key={i} className="relative h-[42px] flex items-center justify-center">
          {i === 22 && <div className="absolute left-[4px] top-[2px] w-[38px] h-[38px] bg-[#d2d0ce]" />}
          <Ico className="relative">{icon}</Ico>
          {i === 22 && <div className="absolute left-0 top-[-2px] w-[46px] h-[47px] border-[4px] border-[#ed1c24] rounded-[10px]" />}
        </div>
      ))}
    </div>
    <div className="mt-[5px] border-t border-[#d2d0ce] shrink-0" />
    <div className="h-[24px] mt-[13px] pl-[17px] flex items-center text-[#484644] shrink-0">Fields</div>
    <div className="h-[40px] w-[254px] ml-[6px] mt-[9px] border border-dashed border-[#b3b0ad] p-[3px] shrink-0">
      <div className="h-full bg-[#edebe9] border border-[#c8c6c4] rounded-[2px] flex items-center pl-[6px] pr-[3px] text-[#323130]">
        Total_Value
        <ChevronDown size={24} strokeWidth={1} className="ml-auto mr-[2px]" />
        <X size={18} strokeWidth={1.200} />
      </div>
    </div>
    <div className="h-[24px] mt-[17px] pl-[17px] flex items-center font-semibold text-[#484644] shrink-0">Drill through</div>
    <div className="h-[24px] mt-[14px] pl-[17px] pr-[33px] flex items-center justify-between text-[#484644] shrink-0">Cross-report<Toggle /></div>
    <div className="h-[24px] mt-[16px] pl-[17px] pr-[33px] flex items-center justify-between text-[#484644] shrink-0">Keep all filters<Toggle on /></div>
    <div className="h-[37px] w-[255px] ml-[5px] mt-[15px] bg-white border border-dashed border-[#b3b0ad] pl-[12px] flex items-center text-[#484644] whitespace-nowrap shrink-0">Add drill-through fields here</div>
    <div className="absolute left-[260px] top-[467px] w-[9px] h-[235px] rounded-full bg-[#d2d0ce]" />
  </div>
);

const CheckBox = ({ on }) =>
  on ? (
    <div className="w-[18px] h-[18px] rounded-[2px] bg-[#117865] flex items-center justify-center">
      <svg width="14" height="14" viewBox="0 0 14 14" fill="none" stroke="white" strokeWidth="1.800"><path d="M2 7.500l3.500 3.500L12 3.500" /></svg>
    </div>
  ) : (
    <div className="w-[18px] h-[18px] rounded-[2px] border border-[#8a8886]" />
  );

const TreeRow = ({ label, on, icon, chev, bg }) => (
  <div className={`h-[36px] flex items-center text-[17px] text-[#484644] relative ${bg ? "bg-[#d2d0ce] w-[255px] ml-[8px] pl-[49px]" : "pl-[57px]"}`}>
    {chev && <ChevronRight size={20} strokeWidth={1} className="absolute left-[32px] top-[8px]" />}
    <CheckBox on={on} />
    <span className="w-[39px] pl-[12px]">{icon}</span>
    <span>{label}</span>
    {bg && <div className="absolute left-[2px] top-0 w-[212px] h-[39px] border-[4px] border-[#ed1c24] rounded-[14px]" />}
  </div>
);

const DataPane = () => (
  <div className="w-[270px] shrink-0 bg-[#f3f2f1] flex flex-col">
    <div className="h-[58px] flex items-center pl-[13px] pr-[13px] shrink-0">
      <span className="text-[22px] font-semibold text-[#252423]">Data</span>
      <span className="ml-auto"><Chevrons /></span>
    </div>
    <div className="h-[39px] w-[258px] ml-[6px] mt-[10px] border border-[#8a8886] rounded-[3px] flex items-center pl-[11px] text-[19px] text-[#484644] shrink-0">
      <SearchIcon s={21} c="#605e5c" />
      <span className="ml-[10px]">Search</span>
    </div>
    <div className="h-[36px] mt-[15px] flex items-center text-[17px] text-[#484644] pl-[10px] relative shrink-0">
      <ChevronDown size={22} strokeWidth={1} />
      <svg width="18" height="18" viewBox="0 0 18 18" fill="none" stroke="#252423" strokeWidth="1.200" className="ml-[3px]">
        <rect x="1" y="1" width="16" height="16" rx="2" />
        <path d="M1 6h16M1 12h16M6 1v16M12 1v16" />
      </svg>
      <span className="absolute left-[44px] top-[17px] w-[18px] h-[18px] rounded-full bg-[#117865] flex items-center justify-center">
        <svg width="10" height="10" viewBox="0 0 10 10" fill="none" stroke="white" strokeWidth="1.800"><path d="M2 5l2 2 4-4" /></svg>
      </span>
      <span className="ml-[9px]">Dataset</span>
    </div>
    <TreeRow label="Component" />
    <TreeRow
      label="Date"
      chev
      icon={
        <svg width="18" height="18" viewBox="0 0 18 18" fill="none" stroke="#323130" strokeWidth="1.200">
          <rect x="1" y="1" width="16" height="16" rx="3" />
          <path d="M1 6h16M5 10h1M9 10h1M13 10h1M5 13h1M9 13h1" />
        </svg>
      }
    />
    <TreeRow
      label="Total_Value"
      on
      icon={
        <svg width="18" height="20" viewBox="0 0 18 20" fill="none" stroke="#323130" strokeWidth="1.200">
          <rect x="1" y="1" width="16" height="18" rx="3" />
          <rect x="4" y="4" width="10" height="3" />
          <path d="M4 10.500h2M8 10.500h2M12 10.500h2M4 14.500h2M8 14.500h2M12 14.500h2" strokeWidth="2" />
        </svg>
      }
    />
    <TreeRow label="Type" bg />
    <TreeRow label="Value" icon={<Sigma s={18} />} />
  </div>
);

const StatusBar = () => (
  <div className="h-[36px] shrink-0 bg-[#f3f2f1] border-t border-[#d2d0ce] flex items-center pl-[6px] text-[15.500px] text-[#484644]">
    Page 1 of 1
    <div className="ml-auto flex items-center text-[#605e5c]">
      <span className="font-bold text-[16px]">-</span>
      <div className="ml-[6px] w-[150px] h-[1px] bg-[#605e5c] relative">
        <div className="absolute left-[33px] -top-[8px] w-[6px] h-[17px] bg-[#605e5c]" />
        <div className="absolute left-[74px] -top-[4px] w-[1px] h-[9px] bg-[#605e5c]" />
      </div>
      <Plus size={14} strokeWidth={2} className="ml-[7px]" />
      <span className="ml-[19px] text-[17px]">53%</span>
      <svg width="24" height="24" viewBox="0 0 24 24" fill="none" stroke="#605e5c" strokeWidth="1.400" className="ml-[29px] mr-[26px]">
        <rect x="1" y="3" width="22" height="18" />
        <path d="M5 10V7h3M16 7h3v3M5 14v3h3M16 17h3v-3" />
      </svg>
    </div>
  </div>
);

const Dot = () => <div className="absolute left-1/2 -translate-x-1/2 -bottom-[9px] w-[7px] h-[7px] rounded-full bg-[#6b6b6b]" />;

const Taskbar = () => (
  <div className="h-[72px] shrink-0 bg-[#e3d9d8] border-t-[2px] border-[#b3b0ad] flex items-center relative [&>*]:shrink-0">
    <div className="absolute left-0 -top-[2px] w-[820px] h-[2px] bg-black" />
    <div className="ml-[28px] w-[44px] relative h-[48px]">
      <svg width="36" height="48" viewBox="0 0 36 48" fill="none" className="absolute left-0 top-0">
        <ellipse cx="14" cy="16" rx="12" ry="6" fill="#f0a020" />
        <rect x="8" y="16" width="12" height="12" fill="#e28a10" />
        <ellipse cx="14" cy="28" rx="13" ry="6" fill="#f0a020" />
        <path d="M8 44l6-5 6 5" stroke="#66c018" strokeWidth="3" />
      </svg>
      <div className="absolute left-[16px] top-[0px] w-[23px] h-[30px] rounded-full bg-[#c8301e] text-white text-[15px] font-semibold flex items-center justify-center">1</div>
    </div>
    <svg width="35" height="35" viewBox="0 0 35 35" className="ml-[332px]">
      <rect x="0" y="0" width="17" height="17" fill="#48bdf0" />
      <rect x="18" y="0" width="17" height="17" fill="#2aa2e8" />
      <rect x="0" y="18" width="17" height="17" fill="#1a90e0" />
      <rect x="18" y="18" width="17" height="17" fill="#0d76d2" />
    </svg>
    <div className="ml-[21px] w-[328px] h-[47px] rounded-full bg-[#f5f1ef] border-2 border-[#cfc8c6] flex items-center pl-[15px] text-[19px] text-[#484644] relative">
      <svg width="24" height="26" viewBox="0 0 24 26" fill="none" stroke="#222" strokeWidth="2.400">
        <circle cx="11" cy="11" r="9" />
        <path d="M17 18l5 6" />
      </svg>
      <span className="ml-[15px]">Search</span>
      <svg width="64" height="46" viewBox="0 0 64 46" fill="none" className="absolute right-[6px] top-[-4px]">
        <path d="M8 38 2 44h50l6-6z" fill="#e3c38a" />
        <path d="M8 20l20-6v18L10 38z" fill="#8dbb68" stroke="#5c8a3e" />
        <path d="M12 22l12-4M12 27l12-4M12 32l12-4" stroke="#fff" strokeWidth="1.500" />
        <path d="M28 22l6-14 2 1-6 15z" fill="#ef7a1a" />
        <rect x="41" y="12" width="17" height="27" rx="6" fill="#1e6fe0" />
        <rect x="46" y="3" width="7" height="10" rx="2" fill="#3b9cf2" />
        <circle cx="49" cy="27" r="5" fill="#6fc3ff" />
      </svg>
    </div>
    <div className="ml-[16px] w-[36px] h-[36px] relative">
      <div className="absolute left-[10px] top-0 w-[25px] h-[28px] bg-[#f2f0ef] rounded-[3px] border border-[#d5d0cf]" />
      <div className="absolute left-0 top-[9px] w-[26px] h-[27px] bg-[#1f1f1f] rounded-[3px]" />
      <div className="absolute left-[10px] top-[9px] w-[16px] h-[19px] bg-[#b5b3b2]" />
    </div>
    <svg width="38" height="34" viewBox="0 0 38 34" className="ml-[33px]">
      <circle cx="24" cy="6" r="5" fill="#7b83eb" />
      <circle cx="33" cy="9" r="4" fill="#5059c9" />
      <path d="M28 13h9v12c0 4-3 6-6 6z" fill="#5059c9" />
      <path d="M13 13h19v12a9 9 0 0 1-19 0z" fill="#7b83eb" />
      <rect x="0" y="8" width="17" height="17" rx="1" fill="#f7f5fb" />
      <text x="8.500" y="21" fontSize="13" fontWeight="700" textAnchor="middle" fill="#4b53bc" fontFamily="Open Sans">T</text>
    </svg>
    <div className="ml-[28px] w-[36px] h-[36px] relative">
      <svg width="36" height="36" viewBox="0 0 36 36">
        <path d="M1 5h13l3 4h18v25H1z" fill="#f5c542" />
        <path d="M1 14h34v20H1z" fill="#ffd35c" />
        <rect x="12" y="22" width="24" height="12" fill="#1a86d8" />
        <path d="M16 28h14" stroke="#fff" strokeWidth="2" />
      </svg>
      <Dot />
    </div>
    <svg width="38" height="38" viewBox="0 0 38 38" className="ml-[28px]">
      <path d="M19 1c11 0 18 8 18 16 0 6-5 9-10 9-6 0-9-3-9-6 0-5 6-5 6-9S20 4 19 1z" fill="#35c1a8" />
      <path d="M19 1C8 1 1 9 1 19s8 18 18 18c6 0 11-3 14-7-4 2-9 2-13 0-6-3-10-10-6-18 1-3 3-7 5-11z" fill="#1173c8" />
      <path d="M17 8c-6 2-10 11-4 20 3 4 11 7 20 2-6 1-14 0-17-7s1-11 1-15z" fill="#0d5ea8" />
    </svg>
    <svg width="36" height="26" viewBox="0 0 36 30" preserveAspectRatio="none" className="ml-[30px]">
      <path d="M0 4v26h8V13z" fill="#4285f4" />
      <path d="M36 4v26h-8V13z" fill="#34a853" />
      <path d="M0 4c2-4 6-4 8-2l10 9 10-9c2-2 6-2 8 2l-8 9-10 8L8 13z" fill="#ea4335" />
      <path d="M28 2c2-2 6-2 8 2v5l-8 6z" fill="#fbbc04" />
    </svg>
    <div className="ml-[28px] w-[38px] h-[36px] relative">
      <svg width="38" height="36" viewBox="0 0 38 36">
        <rect x="8" y="0" width="28" height="12" fill="#41a5ee" rx="2" />
        <rect x="8" y="12" width="28" height="12" fill="#2b7cd3" />
        <rect x="8" y="24" width="28" height="12" fill="#103f91" rx="2" />
        <rect x="0" y="8" width="20" height="20" rx="2" fill="#185abd" />
        <text x="10" y="23" fontSize="14" fontWeight="700" textAnchor="middle" fill="#fff" fontFamily="Open Sans">W</text>
      </svg>
      <Dot />
    </div>
    <div className="ml-[20px] w-[56px] h-[58px] rounded-[5px] bg-[#f1edec] border border-[#e2dcdb] flex items-center justify-center relative">
      <svg width="36" height="36" viewBox="0 0 36 36">
        <rect x="0" y="0" width="36" height="36" fill="#0f78d4" />
        <rect x="20" y="0" width="16" height="36" fill="#e0a40f" />
        <rect x="12" y="10" width="14" height="26" fill="#f2c811" />
        <rect x="4" y="18" width="13" height="18" fill="#f8dc6b" />
      </svg>
      <div className="absolute left-[16px] bottom-[2px] w-[24px] h-[4px] rounded-full bg-[#0f78d4]" />
    </div>
    <div className="ml-[20px] w-[36px] h-[38px] relative">
      <svg width="36" height="38" viewBox="0 0 38 42">
        <path d="M18 1C6 1 0 11 0 20c0 11 8 21 20 21 4 0 4-4 2-7s0-6 5-6 11-3 11-13C38 7 28 1 18 1z" fill="#3fa7e6" />
        <circle cx="8" cy="22" r="4" fill="#e24b26" />
        <circle cx="11" cy="11" r="4" fill="#49b54a" />
        <circle cx="21" cy="7" r="4" fill="#f6c11d" />
        <path d="M30 14v26" stroke="#8b5a2b" strokeWidth="4" />
        <path d="M26 6h8l-1 9h-6z" fill="#e8c79a" />
      </svg>
      <Dot />
    </div>
    <ChevronUp size={24} strokeWidth={1.800} className="ml-[113px] text-[#1f1f1f]" />
    <svg width="26" height="24" viewBox="0 0 26 24" fill="none" stroke="#222" strokeWidth="1.400" className="ml-[24px]">
      <path d="M7 22h13c7 0 6-9 1-9 0-6-8-10-12-4-4 0-8 3-8 7 0 4 3 6 6 6z" fill="#f1eeed" />
    </svg>
    <div className="ml-[21px] w-[46px] text-center text-[18px] leading-[27px] text-[#1f1f1f]">ENG<br />IN</div>
    <svg width="24" height="24" viewBox="0 0 24 24" fill="none" stroke="#222" strokeWidth="1.500" className="ml-[22px]">
      <path d="M2 9c6-6 14-6 20 0" stroke="#a19f9d" />
      <path d="M6 13c4-4 8-4 12 0M9 17c2-2 4-2 6 0" />
      <circle cx="12" cy="20.500" r="1.500" fill="#222" />
    </svg>
    <svg width="26" height="26" viewBox="0 0 26 26" fill="none" stroke="#222" strokeWidth="1.400" className="ml-[9px]">
      <path d="M2 9v8h4l6 6V3L6 9z" />
      <path d="M16 9c2 3 2 5 0 8M20 6c3 4 3 10 0 14" />
    </svg>
    <svg width="26" height="20" viewBox="0 0 26 20" fill="none" stroke="#222" strokeWidth="1.400" className="ml-[12px]">
      <rect x="1" y="2" width="21" height="16" rx="3" />
      <rect x="4" y="5" width="2.500" height="10" fill="#222" />
      <path d="M24 7v6" strokeWidth="2" />
    </svg>
    <div className="ml-[1px] w-[116px] text-right text-[17.500px] leading-[27px] text-[#1f1f1f] whitespace-nowrap">04:10<br />24-03-2024</div>
    <svg width="20" height="24" viewBox="0 0 22 28" className="ml-[14px]">
      <path d="M11 1c-5 0-7 4-7 9 0 5-1 9-4 11h22c-3-2-4-6-4-11 0-5-2-9-7-9z" fill="#0f3f9c" />
      <path d="M7 23h8l-4 4z" fill="#0f3f9c" />
    </svg>
    <div className="ml-[24px] w-[38px] h-[44px] relative">
      <svg width="38" height="40" viewBox="0 0 38 40">
        <path d="M11 3h15c3 0 5 2 6 6l4 14c1 4-2 7-5 7h-6z" fill="#c15ae0" />
        <path d="M12 2c5-2 10 0 10 3L16 30c-1 3-3 5-7 5-6 0-8-4-7-8z" fill="#3f9be8" />
        <path d="M4 22c3-6 10-8 14-6l-3 14c-1 3-3 5-6 5-6 0-7-7-5-13z" fill="#4fc65e" />
        <path d="M22 3c4 0 7 4 8 8H17z" fill="#f18a45" />
      </svg>
      <div className="absolute left-[8px] bottom-0 w-[27px] h-[15px] rounded-[3px] bg-[#ffc000] text-[11px] leading-[15px] font-bold text-center text-[#222]">PRE</div>
    </div>
  </div>
);

export default function App() {
  return (
    <div className="w-[1920px] h-[1080px] overflow-hidden flex flex-col font-['Open_Sans',sans-serif] bg-white">
      <TitleBar />
      <TabBar />
      <Ribbon />
      <div className="h-[732px] shrink-0 flex">
        <Sidebar />
        <Center />
        <FilterPane />
        <VizPane />
        <DataPane />
      </div>
      <StatusBar />
      <Taskbar />
    </div>
  );
}
